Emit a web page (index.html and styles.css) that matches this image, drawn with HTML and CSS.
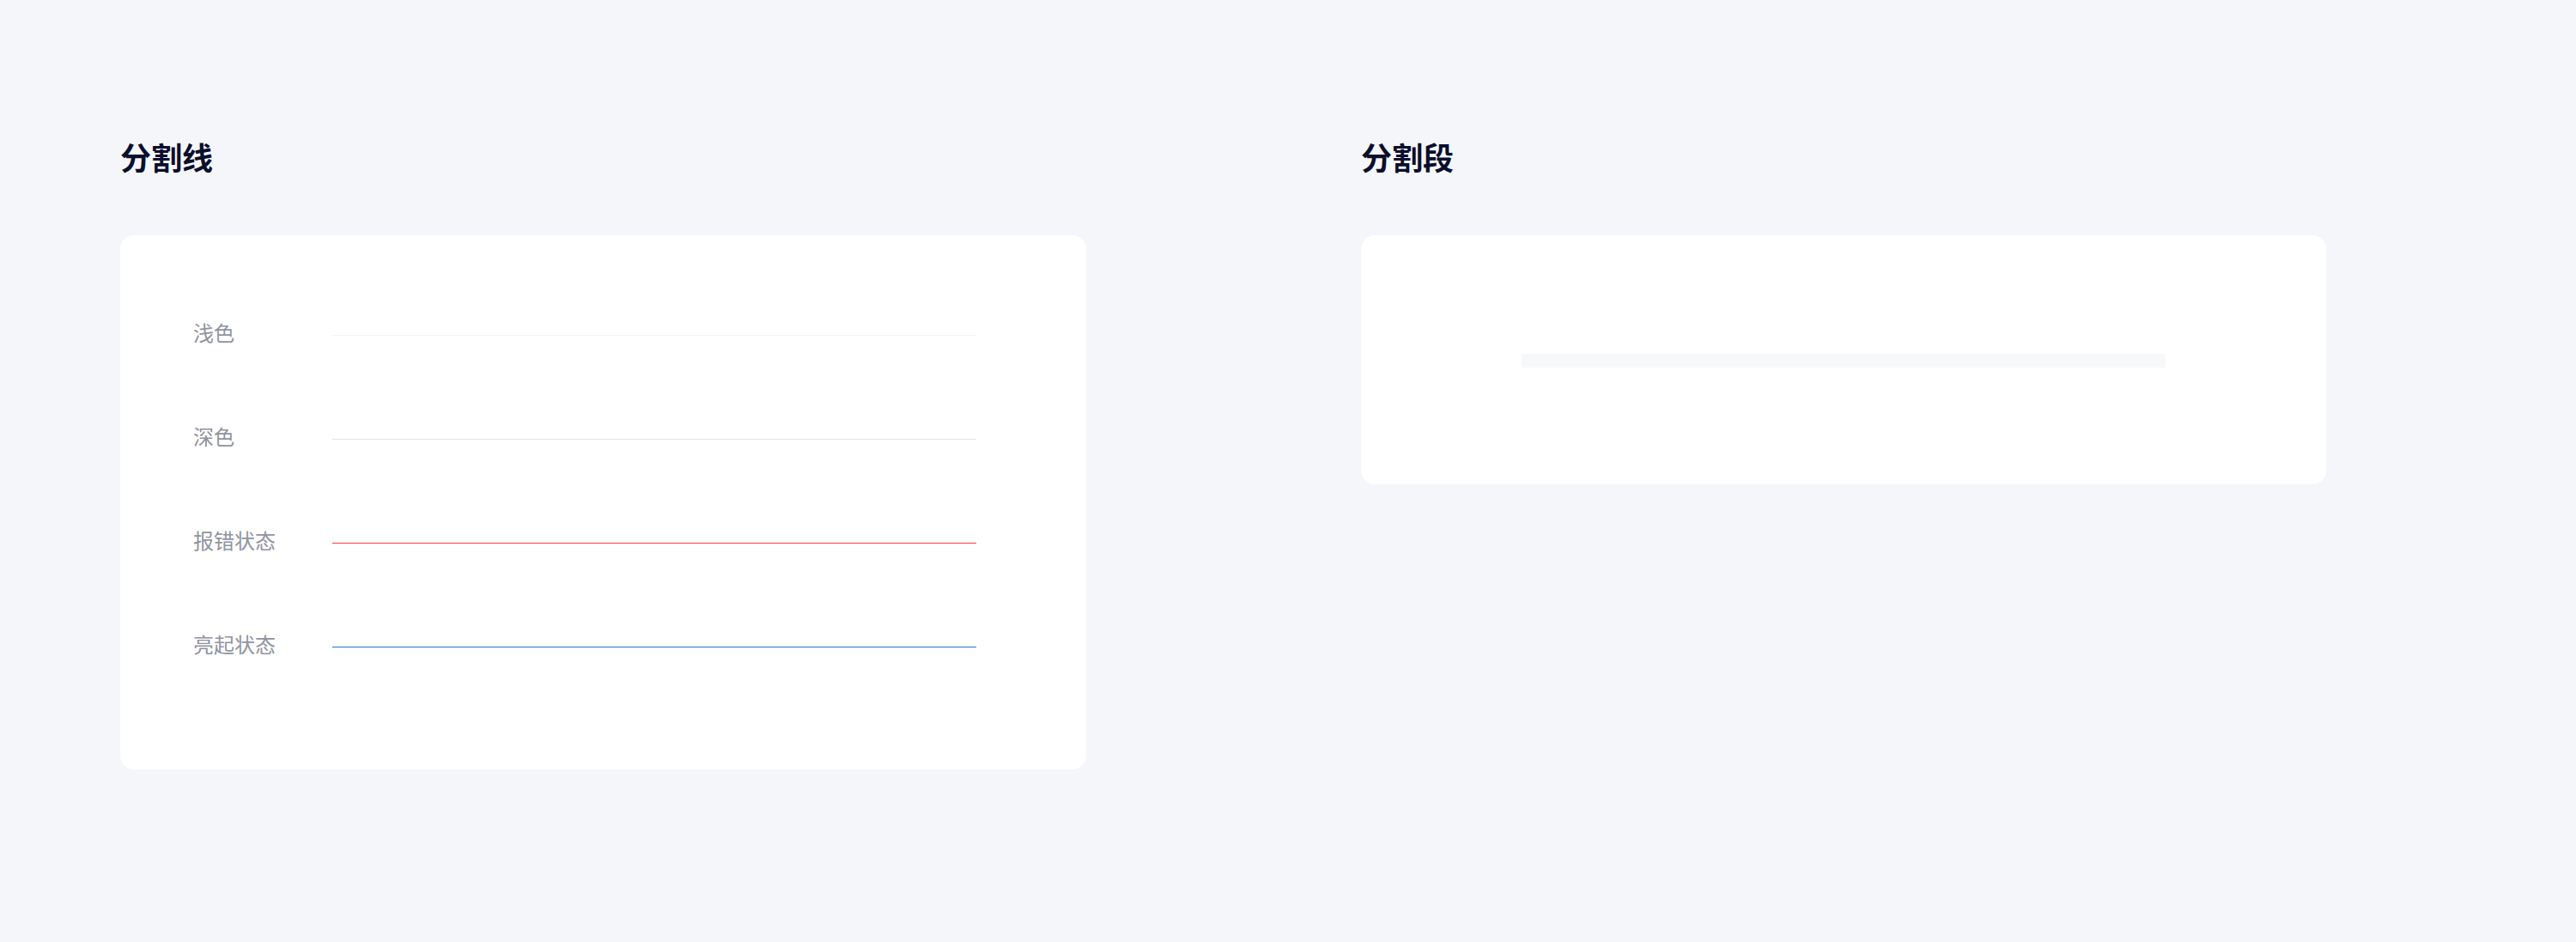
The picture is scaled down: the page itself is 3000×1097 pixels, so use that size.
FILE: index.html
```html
<!DOCTYPE html>
<html lang="zh-CN">
<head>
<meta charset="utf-8">
<title>分割线</title>
<link rel="stylesheet" href="styles.css">
</head>
<body>
<div class="page">
  <section class="col">
    <h2 class="title">分割线</h2>
    <div class="card card-lines">
      <div class="row"><span class="label">浅色</span><span class="line line-light"></span></div>
      <div class="row"><span class="label">深色</span><span class="line line-dark"></span></div>
      <div class="row"><span class="label">报错状态</span><span class="line line-error"></span></div>
      <div class="row"><span class="label">亮起状态</span><span class="line line-active"></span></div>
    </div>
  </section>
  <section class="col">
    <h2 class="title">分割段</h2>
    <div class="card card-segment">
      <div class="segment"></div>
    </div>
  </section>
</div>
</body>
</html>
```
FILE: styles.css
```css
html, body {
  margin: 0;
  padding: 0;
  background: #f5f6fa;
  font-family: "Noto Sans CJK SC", "Noto Sans", sans-serif;
}
.page {
  display: flex;
  gap: 320px;
  padding: 164px 140px 0 140px;
}
.col {
  width: 1125px;
  display: flex;
  flex-direction: column;
}
.col + .col {
  width: 1124px;
}
.title {
  margin: 0 0 74px 0;
  font-size: 36px;
  line-height: 36px;
  font-weight: 700;
  color: #0b0f2c;
}
.card {
  background: #ffffff;
  border-radius: 16px;
}
.card-lines {
  padding: 56px 128px 82px 85px;
}
.row {
  height: 121px;
  display: grid;
  grid-template-columns: 162px 750px;
  align-items: center;
}
.label {
  font-size: 24px;
  line-height: 32px;
  color: #90939f;
  margin-bottom: 8px;
}
.line {
  display: block;
  height: 1px;
}
.line-light { background: #f2f3f5; }
.line-dark { background: #e3e4e8; }
.line-error { background: #f53f3f; }
.line-active { background: #2f6fd6; }
.card-segment {
  height: 290px;
  display: flex;
  align-items: center;
  justify-content: center;
}
.segment {
  width: 750px;
  height: 16px;
  background: #f7f8fa;
  margin-top: 2px;
}
```
